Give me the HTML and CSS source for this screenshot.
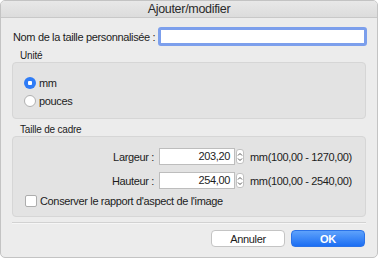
FILE: index.html
```html
<!DOCTYPE html>
<html lang="fr">
<head>
  <meta charset="UTF-8" />
  <title>Ajouter/modifier</title>
  <link rel="stylesheet" href="styles.css">
</head>
<body>
  <div class="window">
    <div class="titlebar">Ajouter/modifier</div>
    <div class="content">
      <div class="name-row">
        <span class="label">Nom de la taille personnalisée :</span>
        <div class="name-input"></div>
      </div>

      <div class="legend">Unité</div>
      <div class="group unit-group">
        <div class="radio-row"><span class="radio checked"></span><span>mm</span></div>
        <div class="radio-row"><span class="radio"></span><span>pouces</span></div>
      </div>

      <div class="legend legend-2">Taille de cadre</div>
      <div class="group size-group">
        <div class="field-row">
          <span class="field-label">Largeur :</span>
          <div class="num-input">203,20</div>
          <span class="stepper"><svg width="6" height="12" viewBox="0 0 6 12"><path d="M1 4.5 3 2.5 5 4.5M1 7.5 3 9.5 5 7.5" fill="none" stroke="#555" stroke-width="1"/></svg></span>
          <span class="range">mm(100,00 - 1270,00)</span>
        </div>
        <div class="field-row">
          <span class="field-label">Hauteur :</span>
          <div class="num-input">254,00</div>
          <span class="stepper"><svg width="6" height="12" viewBox="0 0 6 12"><path d="M1 4.5 3 2.5 5 4.5M1 7.5 3 9.5 5 7.5" fill="none" stroke="#555" stroke-width="1"/></svg></span>
          <span class="range">mm(100,00 - 2540,00)</span>
        </div>
        <div class="check-row"><span class="checkbox"></span><span>Conserver le rapport d'aspect de l'image</span></div>
      </div>

      <div class="separator"></div>

      <div class="buttons">
        <button class="btn">Annuler</button>
        <button class="btn btn-primary">OK</button>
      </div>
    </div>
  </div>
</body>
</html>
```

FILE: styles.css
```css
:root {
  --bg: #ececec;
  --group: #e3e3e3;
  --group-border: #d6d6d6;
  --text: #1c1c1c;
  --blue: #2f7cf6;
}
html, body { margin: 0; padding: 0; }
body {
  font-family: 'Liberation Sans', Arial, sans-serif;
  font-size: 11px;
  letter-spacing: -0.35px;
  white-space: nowrap;
  color: var(--text);
  background: #fff;
}
.window {
  width: 378px; height: 258px;
  box-sizing: border-box;
  background: var(--bg);
  border: 1px solid #c3c3c3;
  border-radius: 5px;
  overflow: hidden;
}
.titlebar {
  height: 16px; line-height: 16px;
  text-align: center;
  font-size: 12.5px;
  letter-spacing: -0.3px;
  color: #2a2a2a;
  background: linear-gradient(#e8e8e8, #dcdcdc);
  border-bottom: 1px solid #c8c8c8;
}
.content { padding: 9px 11px 0 11px; }

.name-row { display: flex; align-items: center; justify-content: space-between; height: 19px; }
.label { padding-left: 1px; }
.name-input {
  flex: none;
  width: 209px; height: 19px; box-sizing: border-box;
  margin-right: -1px;
  background: #fff;
  border: 3px solid #7c9fec;
  border-radius: 3px;
}

.legend { height: 12px; line-height: 12px; margin-top: 4px; padding-left: 8px; font-size: 10px; letter-spacing: -0.2px; }
.legend-2 { margin-top: 5px; }
.group {
  background: var(--group);
  border: 1px solid var(--group-border);
  border-radius: 4px;
}
.unit-group { padding: 11px 11px 8px 11px; }
.radio-row { display: flex; align-items: center; gap: 3px; height: 18px; }
.radio {
  width: 12px; height: 12px; box-sizing: border-box;
  border-radius: 50%;
  background: #fff;
  border: 1px solid #b0b0b0;
}
.radio.checked {
  border: none;
  background: radial-gradient(circle, #fff 0 2px, var(--blue) 2.5px);
}

.size-group { padding: 11px 0 8px 0; display: flex; flex-direction: column; gap: 7px; }
.field-row { display: flex; align-items: center; height: 17px; }
.field-label { width: 141px; text-align: right; margin-right: 5px; }
.num-input {
  width: 76px; height: 17px; box-sizing: border-box;
  background: #fff;
  border: 1px solid #bdbdbd;
  text-align: right;
  padding-right: 4px;
  line-height: 15px;
}
.stepper {
  display: flex; align-items: center; justify-content: center;
  width: 8px; height: 15px; box-sizing: border-box;
  margin-left: 1px;
  background: #fff;
  border: 1px solid #c2c2c2;
  border-radius: 3px;
}
.range { margin-left: 6px; }
.check-row { display: flex; align-items: center; gap: 3px; height: 14px; margin-top: -2px; padding-left: 12px; }
.checkbox {
  width: 10px; height: 10px;
  background: #fff;
  border: 1px solid #adadad;
  border-radius: 2px;
}

.separator { margin-top: 5px; height: 1px; background: #d2d2d2; border-bottom: 1px solid #f6f6f6; }

.buttons { display: flex; justify-content: flex-end; gap: 6px; margin-top: 6px; margin-right: 1px; }
.btn {
  width: 74px; height: 17px; padding: 0;
  font-family: inherit; font-size: 11px; letter-spacing: -0.35px; color: var(--text);
  background: #fff;
  border: 1px solid #c4c4c4;
  border-radius: 4px;
}
.btn-primary {
  color: #fff; font-weight: 700;
  background: linear-gradient(#5ea2fb, #1c6ef3);
  border-color: #2a72e8;
}
```
